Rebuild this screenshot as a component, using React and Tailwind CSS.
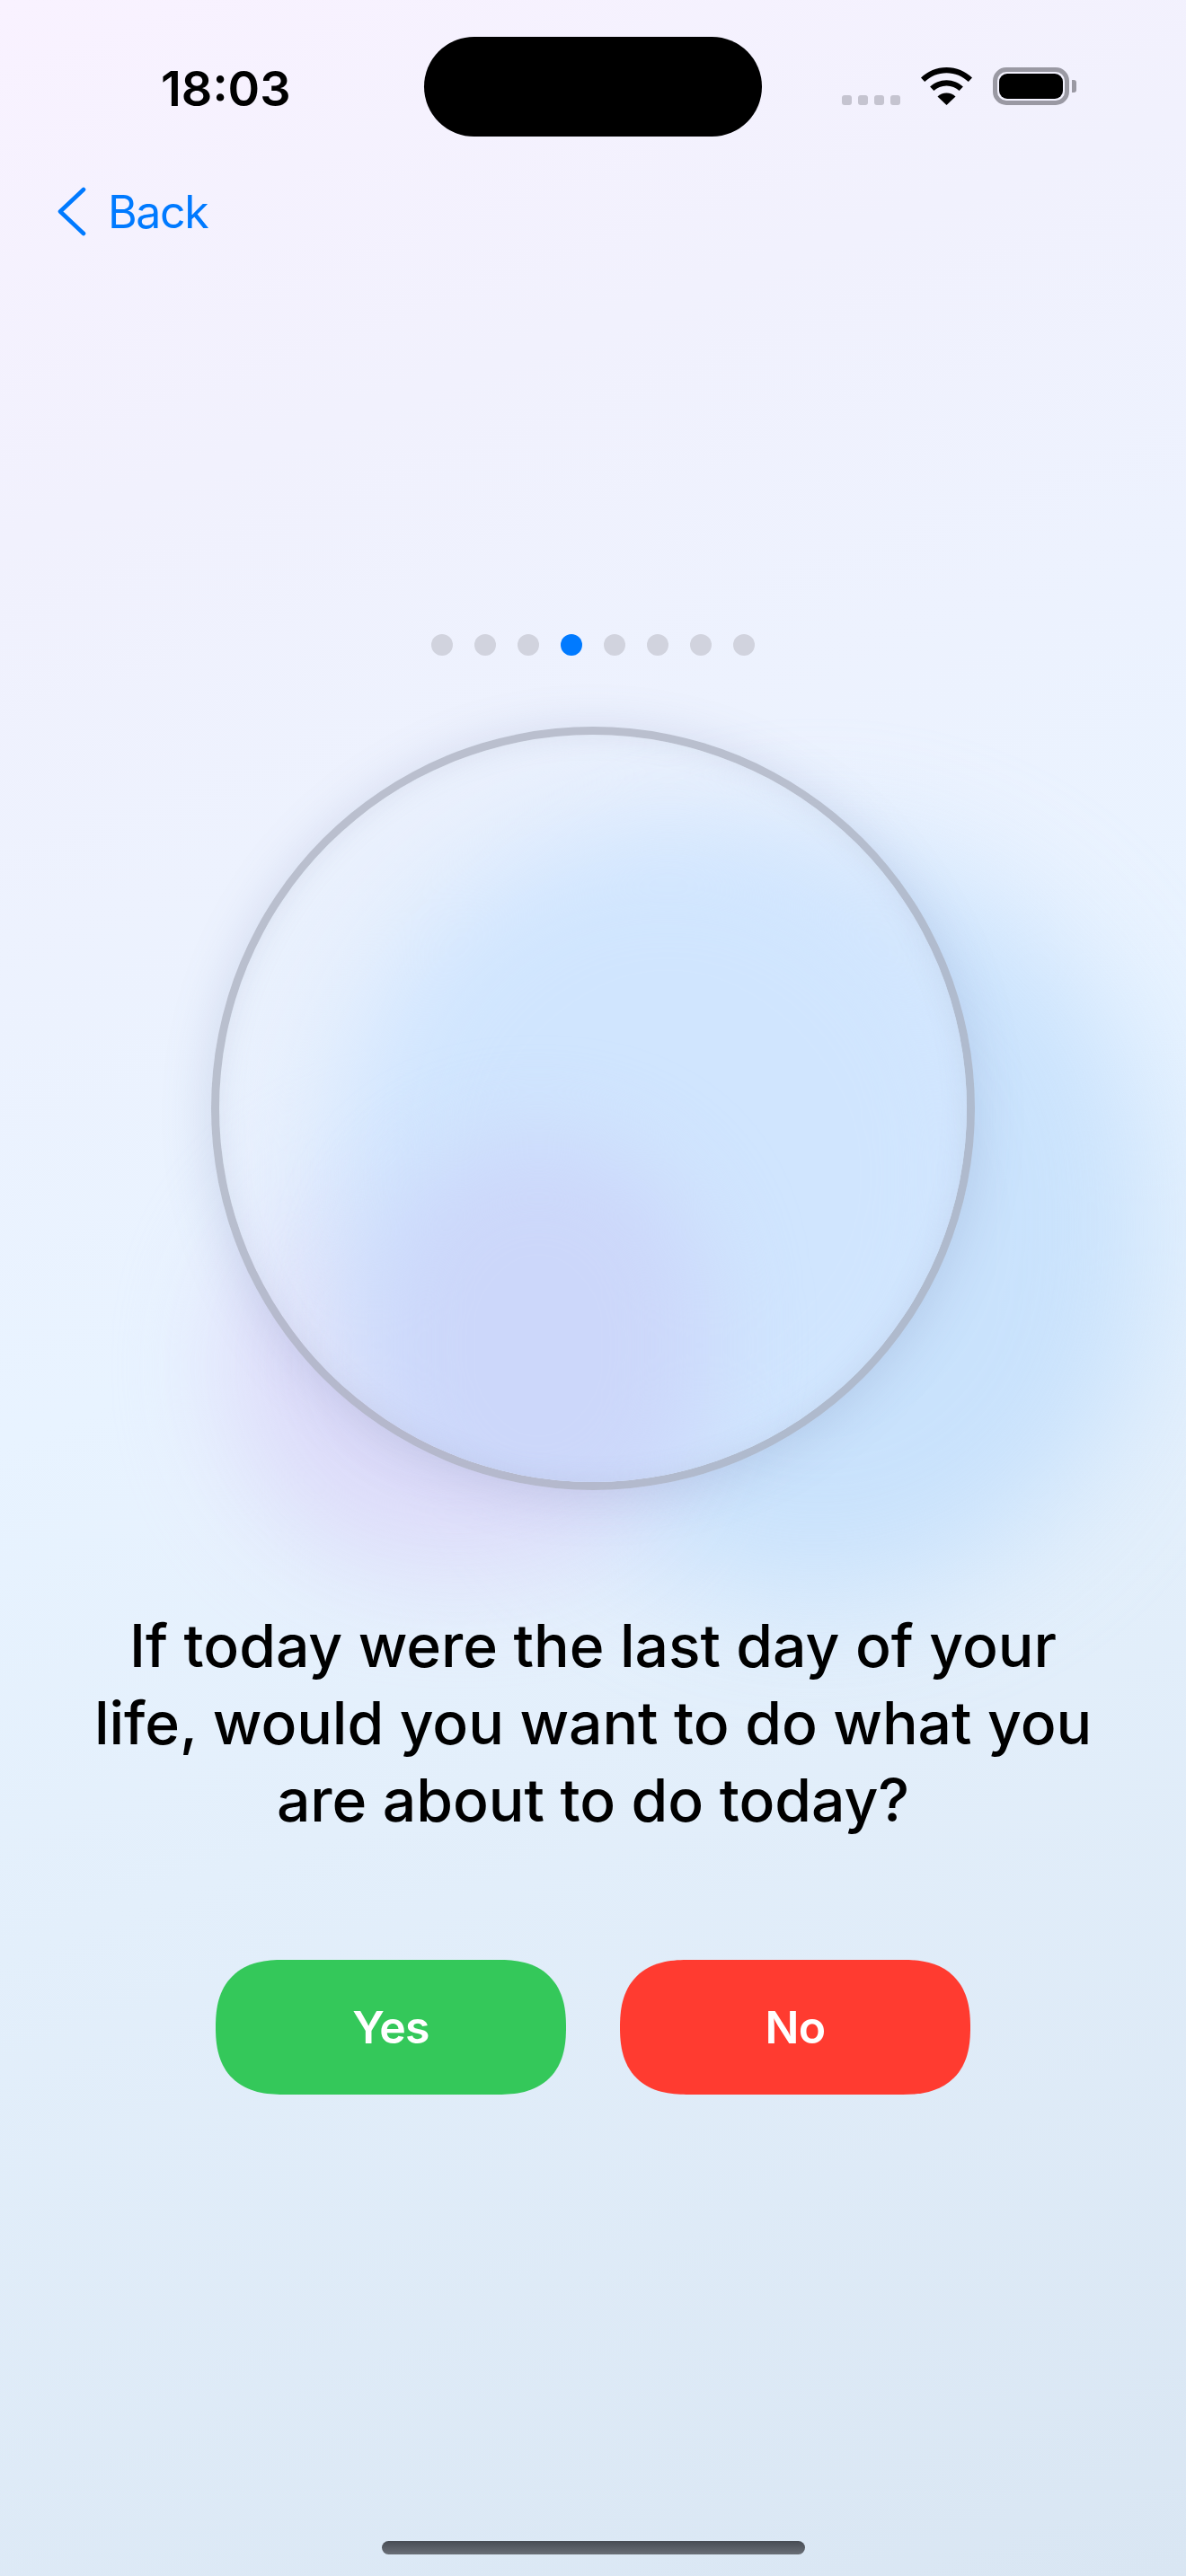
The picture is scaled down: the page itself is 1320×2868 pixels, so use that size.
import React from 'react';

const font = "font-['Inter','Liberation_Sans',sans-serif]";

function StatusBar() {
    return (
        <div className="flex items-start pl-[179px] pt-[41px]">
            <span className="w-[293px] pt-[26px] text-[54px] leading-[63px] font-semibold tracking-[0px] text-black">18:03</span>
            <div className="w-[376px] h-[111px] rounded-[56px] bg-black" />
            <div className="flex items-end ml-[89px] mt-[34px] h-[42px]">
                <div className="flex gap-[7px] mb-0">
                    {[0, 1, 2, 3].map((i) => (
                        <span key={i} className="w-[11px] h-[11px] rounded-[3px] bg-[#c5c4d0]" />
                    ))}
                </div>
                <svg className="ml-[23px]" width="57" height="42" viewBox="0 0 57 42">
                    <path d="M28.5 0C17.5 0 7.6 4.3 0 11.6L4.2 16C10.6 9.9 19.1 6.2 28.5 6.2S46.4 9.9 52.8 16L57 11.6C49.4 4.3 39.5 0 28.5 0Z" fill="#000" />
                    <path d="M28.5 14.2C21.4 14.2 14.9 17 10.1 21.6L14.4 26C18.1 22.5 23 20.4 28.5 20.4S38.9 22.5 42.6 26L46.9 21.6C42.1 17 35.6 14.2 28.5 14.2Z" fill="#000" />
                    <path d="M28.5 28.6C24.6 28.6 21.1 30.1 18.5 32.6L28.5 42L38.5 32.6C35.9 30.1 32.4 28.6 28.5 28.6Z" fill="#000" />
                </svg>
                <div className="flex items-center ml-[23px]">
                    <div className="w-[85px] h-[42px] rounded-[15px] border-[5px] border-[#9a99a3] p-[2px]">
                        <div className="w-full h-full rounded-[9px] bg-black" />
                    </div>
                    <span className="ml-[3px] w-[5px] h-[14px] rounded-r-[3px] bg-[#9a99a3]" />
                </div>
            </div>
        </div>
    );
}

function Answer({ label, color }) {
    return (
        <button className={`w-[390px] h-[150px] rounded-[75px] [corner-shape:superellipse(1.3)] text-white text-[50px] font-semibold tracking-[-0.8px] ${color}`}>
            {label}
        </button>
    );
}

export default function App() {
    return (
        <div className={`relative w-full h-[2868px] overflow-hidden flex flex-col bg-[linear-gradient(160deg,#f9f2ff_0%,#f1f1fd_18%,#e8f3ff_48%,#e3effb_65%,#d9e6f3_100%)] ${font}`}>
            {/* Soft colour behind the circle */}
            <div className="absolute left-[540px] top-[950px] w-[740px] h-[830px] rounded-full bg-[#bddcfc] opacity-70 blur-[70px]" />
            <div className="absolute left-[250px] top-[1290px] w-[520px] h-[460px] rounded-full bg-[#dcd9f9] opacity-90 blur-[60px]" />

            <div className="relative flex flex-col flex-1">
                <StatusBar />

                {/* Back */}
                <div className="flex items-center ml-[64px] mt-[57px] h-[53px]">
                    <svg width="32" height="55" viewBox="0 0 32 55" fill="none" stroke="#007aff" strokeWidth="4.6" strokeLinecap="round" strokeLinejoin="round">
                        <path d="M29 3L3 27.5L29 52" />
                    </svg>
                    <span className="ml-[24px] text-[50px] leading-none tracking-[-1.4px] text-[#007aff]">Back</span>
                </div>

                {/* Pager */}
                <div className="flex justify-center gap-[24px] mt-[444px]">
                    {[0, 1, 2, 3, 4, 5, 6, 7].map((i) => (
                        <span key={i} className={`w-[24px] h-[24px] rounded-full ${i === 3 ? 'bg-[#007aff]' : 'bg-[#d1d3de]'}`} />
                    ))}
                </div>

                {/* Circle */}
                <div className="relative mx-auto mt-[79px] w-[850px] h-[850px] rounded-full border-[9px] border-[#8a8d9f]/50 shadow-[0_8px_55px_rgba(110,125,175,0.24)] overflow-hidden bg-[#e8effc]/40">
                    <div className="absolute left-[130px] top-[100px] w-[740px] h-[780px] rounded-full bg-[#d0e5fe] blur-[65px]" />
                    <div className="absolute left-[165px] top-[450px] w-[380px] h-[460px] rounded-full bg-[#ccd7fa] blur-[50px]" />
                    <div className="absolute inset-0 rounded-full shadow-[inset_0_0_30px_rgba(130,140,175,0.16)]" />
                </div>

                {/* Question */}
                <p className="mt-[130px] text-center text-[66px] leading-[86px] tracking-[-0.05px] font-medium text-black">
                    If today were the last day of your<br />
                    life, would you want to do what you<br />
                    are about to do today?
                </p>

                {/* Answers */}
                <div className="flex justify-center gap-[60px] mt-[135px]">
                    <Answer label="Yes" color="bg-[#34c85a]" />
                    <Answer label="No" color="bg-[#ff3b30]" />
                </div>

                {/* Home indicator */}
                <div className="mx-auto mt-[497px] w-[471px] h-[15px] rounded-full bg-gradient-to-b from-[#474c54] to-[#6a6f77]" />
            </div>
        </div>
    );
}
